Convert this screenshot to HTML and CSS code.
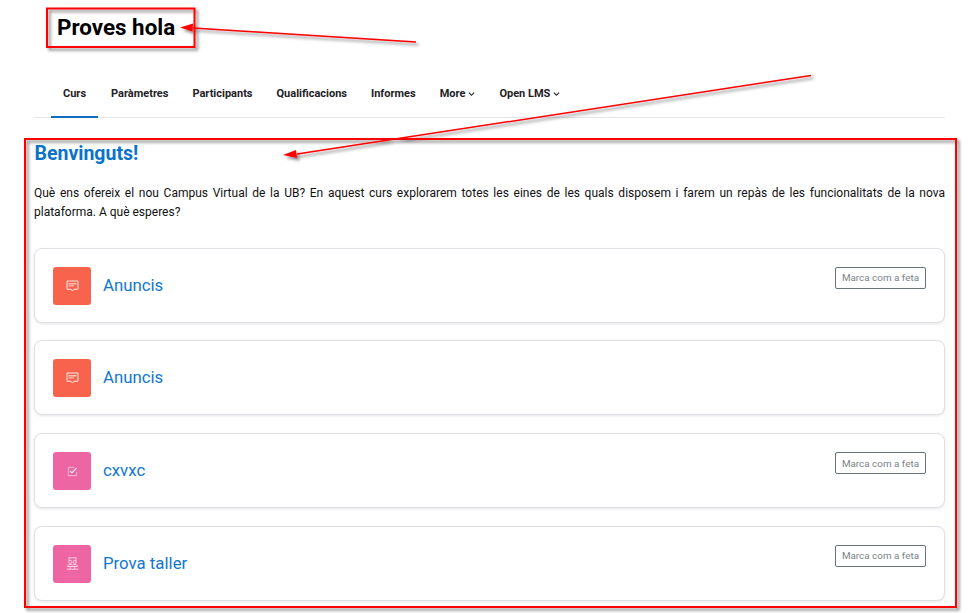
FILE: index.html
```html
<!DOCTYPE html>
<html lang="ca">
<head>
<meta charset="utf-8">
<title>Proves hola</title>
<link rel="stylesheet" href="styles.css">
</head>
<body>
<div class="page">
  <header class="head"><h1>Proves hola</h1></header>
  <nav class="tabs">
    <a class="tab active">Curs</a>
    <a class="tab">Paràmetres</a>
    <a class="tab">Participants</a>
    <a class="tab">Qualificacions</a>
    <a class="tab">Informes</a>
    <a class="tab">More <svg class="chev" viewBox="0 0 8 6"><path d="M1 1.5 4 4.5 7 1.5"/></svg></a>
    <a class="tab">Open LMS <svg class="chev" viewBox="0 0 8 6"><path d="M1 1.5 4 4.5 7 1.5"/></svg></a>
  </nav>
  <main class="content">
    <h2>Benvinguts!</h2>
    <p class="intro">Què ens ofereix el nou Campus Virtual de la UB? En aquest curs explorarem totes les eines de les quals disposem i farem un repàs de les funcionalitats de la nova plataforma. A què esperes?</p>
    <section class="card">
      <span class="icon orange"><svg class="chat" viewBox="0 0 13 12"><path class="ln" d="M1 1h11v8.200H8L6.500 11 5 9.200H1z"/><path class="bar" d="M2.500 3h8v1.500h-8zM2.500 5.300h5.500v1.300H2.500z"/></svg></span>
      <a class="name">Anuncis</a>
      <button class="done">Marca com a feta</button>
    </section>
    <section class="card">
      <span class="icon orange"><svg class="chat" viewBox="0 0 13 12"><path class="ln" d="M1 1h11v8.200H8L6.500 11 5 9.200H1z"/><path class="bar" d="M2.500 3h8v1.500h-8zM2.500 5.300h5.500v1.300H2.500z"/></svg></span>
      <a class="name">Anuncis</a>
    </section>
    <section class="card">
      <span class="icon pink"><svg class="check" viewBox="0 0 12 12"><path class="ln faint" d="M10.500 6.500v4h-9v-9H8"/><path class="ln strong" d="M3.600 5.600 5.400 7.400 10.400 2.400"/></svg></span>
      <a class="name">cxvxc</a>
      <button class="done">Marca com a feta</button>
    </section>
    <section class="card">
      <span class="icon pink"><svg class="work" viewBox="0 0 13 13"><path class="ln thin" d="M2.500 .8h8M3 .8v3M10 .8v3"/><circle class="ln thin" cx="4.300" cy="5" r="1.600"/><circle class="ln thin" cx="8.700" cy="5" r="1.600"/><path class="ln thin" d="M1.500 9.500c0-1.500 1.200-2 2.800-2 1 0 1.700.3 2.200.8.500-.5 1.200-.8 2.200-.8 1.600 0 2.800.5 2.800 2z"/><path class="ln thin" d="M.6 12.200h11.800M4.300 9.500v2.700M8.700 9.500v2.700"/></svg></span>
      <a class="name">Prova taller</a>
      <button class="done">Marca com a feta</button>
    </section>
  </main>
</div>
<svg class="notes" viewBox="0 0 970 613" aria-hidden="true">
  <defs>
    <filter id="sh" x="-5%" y="-5%" width="110%" height="110%"><feDropShadow dx="2.500" dy="2.500" stdDeviation="1.500" flood-color="#000" flood-opacity=".5"/></filter>
  </defs>
  <g filter="url(#sh)">
    <rect class="frame" x="47" y="8.500" width="147.500" height="38.500"/>
    <path class="arrowline" d="M193 28 416 42"/>
    <path class="arrowhead" d="M180 27.500 193 23.500 192.500 31.500z"/>
    <path class="arrowline" d="M811 75.500 297 154"/>
    <path class="arrowhead" d="M283 155 296 150 297 158z"/>
    <rect class="frame" x="25" y="139" width="931" height="468"/>
  </g>
</svg>
</body>
</html>
```
FILE: styles.css
```css
* { box-sizing: border-box; }
html, body { margin: 0; padding: 0; background: #fff; }
body { font-family: Roboto, "Liberation Sans", sans-serif; color: #111; overflow: hidden; }
.page { width: 970px; height: 613px; padding: 0 25px 0 34px; overflow: hidden; }
.head { height: 70px; padding: 13px 0 0 23px; }
h1 { margin: 0; font-size: 22.400px; line-height: 28px; font-weight: 700; color: #000; }
.tabs { display: flex; height: 48px; padding-left: 17px; border-bottom: 1px solid #e6e6e6; }
.tab { display: flex; align-items: center; gap: 3px; height: 48px; padding: 0 12px 2px; font-size: 11px; font-weight: 700; color: #1d2125; white-space: nowrap; }
.tab.active { margin-right: 1px; padding: 0 12px; border-bottom: 2px solid #0f6cbf; }
.chev { width: 7px; height: 6px; margin-top: 2px; fill: none; stroke: #1d2125; stroke-width: 1.300; }
.content { padding-top: 24px; }
h2 { margin: 0 0 0 .5px; font-size: 19.500px; line-height: 24px; font-weight: 700; color: #0b72c9; }
.intro { margin: 18px 0 25.600px; font-size: 12px; line-height: 19px; text-align: justify; color: #111; }
.card { display: flex; align-items: flex-start; height: 75px; margin-bottom: 17.750px; padding: 18px 18px 0; background: #fff; border: 1px solid #dfe0e6; border-radius: 8px; box-shadow: 0 1px 3px rgba(0,0,0,.1); }
.icon { display: flex; align-items: center; justify-content: center; flex: none; width: 38px; height: 38px; border-radius: 3px; }
.icon svg { fill: none; }
.chat { width: 13px; height: 12px; }
.check { width: 11px; height: 11px; }
.work { width: 13px; height: 13px; }
.ln { fill: none; stroke: #fff; stroke-width: 1; opacity: .85; }
.bar { fill: #fff; opacity: .6; }
.thin { stroke-width: .9; opacity: .75; }
.faint { opacity: .6; }
.strong { stroke-width: 1.200; opacity: 1; }
.orange { background: #f7634d; }
.pink { background: #ed65a2; }
.name { margin-left: 12px; font-size: 16.800px; line-height: 37.500px; color: #1177d1; }
.done { margin-left: auto; height: 22px; padding: 0 6px; font-family: inherit; font-size: 9.900px; color: #7a8289; background: #fff; border: 1px solid #6a737b; border-radius: 2px; }
.notes { position: absolute; left: 0; top: 0; width: 970px; height: 613px; pointer-events: none; }
.frame { fill: none; stroke: #f00; stroke-width: 2; }
.arrowline { fill: none; stroke: #f00; stroke-width: 1.500; }
.arrowhead { fill: #f00; }
```
